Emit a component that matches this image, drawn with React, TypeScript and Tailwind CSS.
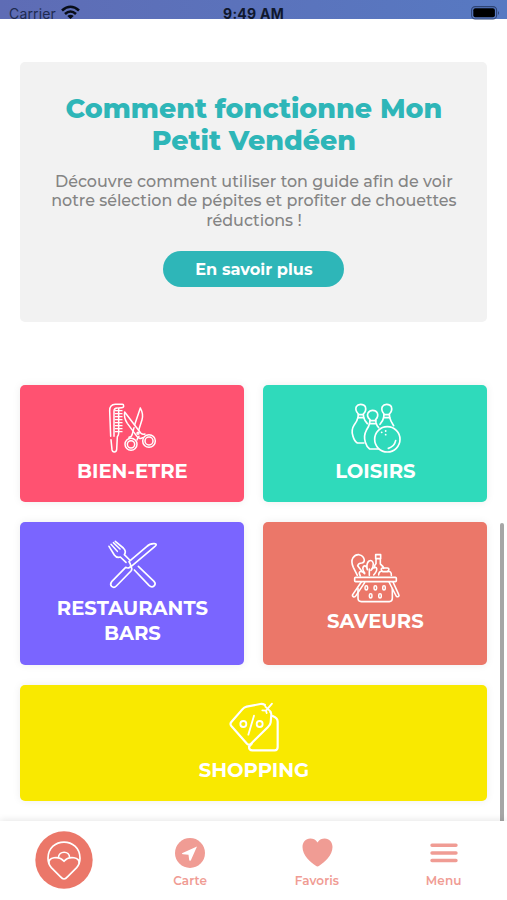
import { ReactNode } from "react";
import clsx from "clsx";

function CombIcon() {
    return (
        <svg className="w-[50px] h-[51px] overflow-visible" viewBox="51 37 150 153" fill="none" stroke="currentColor" strokeWidth="4.5" strokeLinecap="round" strokeLinejoin="round">
            <path d="M62 137 L59 60 Q59 42 76 41 L97 41 Q101 41 101 46 Q101 51 95 51 L86 52 V128 Q86 133 82 138 L80 177 Q79 184 73 184 Q67 184 66 177 L63 147" />
            <path d="M72 137 V62 Q72 52 82 52" />
            <path d="M76 60H96M76 69H96M76 78H96M76 87H96M76 96H96M76 105H96M76 114H96M76 123H96" strokeWidth="4" />
            <path d="M104 64 Q101 82 112 98 L139 135 Q148 148 158 141 M104 64 L152 127 Q158 133 165 130" />
            <path d="M151 52 Q161 70 156 87 L146 119 M151 52 L134 102 M132 111 L127 130 Q125 139 117 140 M147 137 Q142 142 141 148" />
            <circle cx="144" cy="128" r="3" />
            <circle cx="123" cy="161" r="18" />
            <circle cx="123" cy="161" r="11" />
            <circle cx="177" cy="151" r="19" />
            <circle cx="177" cy="151" r="12" />
        </svg>
    );
}

function BowlingIcon() {
    return (
        <svg className="w-[50px] h-[51px] overflow-visible" viewBox="59 37 150 153" fill="none" stroke="currentColor" strokeWidth="5" strokeLinecap="round" strokeLinejoin="round">
            <path d="M84 70 Q73 59 78 48 Q82 41 91 41 Q101 41 105 48 Q109 60 99 70 L100 80 Q102 89 111 99 M84 70 L83 80 Q81 90 72 102 Q61 119 68 137 Q72 152 81 157 H101" />
            <path d="M84 72H99M83 81H100" />
            <path d="M119 87 Q108 77 113 67 Q118 59 127 59 Q137 59 141 67 Q145 77 136 87 L137 96 Q139 105 145 111 M119 87 L118 97 Q116 107 108 119 Q99 135 105 155 Q109 169 118 175 H144" />
            <path d="M119 90H136M118 99H137" />
            <path d="M161 70 Q151 59 156 48 Q160 41 169 41 Q179 41 183 48 Q187 60 177 70 L178 80 Q180 90 190 105 M161 70 L160 80 Q159 89 149 101" />
            <path d="M161 72H177M160 81H178" />
            <circle cx="171" cy="146" r="38" />
            <path d="M196 150 Q192 168 174 173" />
            <path d="M154 125h.1M166 121h.1M166 132h.1" strokeWidth="5.5" />
        </svg>
    );
}

function CutleryIcon() {
    return (
        <svg className="w-[50px] h-[51px] overflow-visible" viewBox="51 31 150 153" fill="none" stroke="currentColor" strokeWidth="5" strokeLinecap="round" strokeLinejoin="round">
            <path d="M57 50 L73 76 Q80 86 91 82 L108 98 M76 35 L100 55 Q110 65 103 75 L119 91" />
            <path d="M63 44 L82 65 M70 39 L90 58" strokeWidth="4.5" />
            <path d="M123 111 L194 51 Q204 43 193 42 Q180 41 170 51 L117 96 Q126 108 119 113 Q114 117 107 113 L65 156 Q59 164 65 170 Q72 176 79 169 L123 124 Q128 118 123 111" />
            <path d="M133 121 L177 167 Q185 175 192 169 Q199 162 192 155 L145 110" />
        </svg>
    );
}

function BasketIcon() {
    return (
        <svg className="w-[50px] h-[51px] overflow-visible" viewBox="59 38 150 153" fill="none" stroke="currentColor" strokeWidth="4.8" strokeLinecap="round" strokeLinejoin="round">
            <rect x="73" y="111" width="125" height="13" rx="3" />
            <path d="M83 145 V174 Q83 184 93 184 H177 Q186 184 186 174 V145" />
            <path d="M93 125 L67 163 Q65 168 70 170 Q74 171 77 166 L103 127 M176 125 L196 164 Q199 171 203 169 Q208 167 205 162 L188 125" />
            <path d="M81 105 L69 81 Q61 64 68 52 Q75 42 86 43 Q100 46 102 59 Q102 67 94 68 Q85 68 82 76 L94 92" />
            <path d="M90 107 Q84 97 89 94 Q94 91 103 100 M103 98 Q93 83 101 77 Q108 74 111 88 Q107 69 116 62 Q126 57 129 70 Q130 79 122 90 Q131 77 138 82 Q143 89 130 104 M117 86V105" />
            <path d="M136 43 H151 V55 H136 Z M137 57 V70 Q131 75 133 82 M150 57 V71 Q158 77 160 84" />
            <path d="M145 104 Q145 92 156 93 Q149 84 157 83 H171 Q180 84 172 93 Q184 92 183 105 M157 94H173" />
            <path d="M108 140v5M135 140v5M161 140v5M121 164v5M149 164v5" strokeWidth="12" />
            <path d="M108 140v5M135 140v5M161 140v5M121 164v5M149 164v5" stroke="#eb7769" strokeWidth="3" />
        </svg>
    );
}

function TagIcon() {
    return (
        <svg className="w-[51px] h-[51px] overflow-visible" viewBox="112 37 153 153" fill="none" stroke="currentColor" strokeWidth="6.5" strokeLinecap="round" strokeLinejoin="round">
            <path d="M223 46 Q216 42 209 43 L168 51 Q160 53 155 59 L122 97 Q117 103 122 109 L169 162 Q175 168 181 162 L232 112 Q239 106 240 98 L242 75 Q242 70 239 67" />
            <path d="M246 79 Q261 85 261 96 V172 Q261 182 252 182 H185 Q175 182 175 171 M175 171 L183 162" />
            <path d="M215 62 L226 63 L228 70 M226 63 L244 42 M224 51 L240 66" strokeWidth="5.5" />
            <path d="M190 78 L173 135" strokeWidth="5.5" />
            <circle cx="158" cy="103" r="9" strokeWidth="5.5" />
            <circle cx="207" cy="103" r="9" strokeWidth="5.5" />
        </svg>
    );
}

interface CategoryProps {
    className: string;
    icon: ReactNode;
    children: ReactNode;
}
function Category({ className, icon, children }: CategoryProps) {
    return (
        <button className={clsx("flex flex-col items-center justify-center rounded-[5px] text-white shadow-[0_0_8px_rgba(0,0,0,0.07)]", className)}>
            {icon}
            <span className="mt-[4.8px] text-[19.6px] leading-[25.4px] font-bold">{children}</span>
        </button>
    );
}

interface TabProps {
    label: string;
    children: ReactNode;
}
function Tab({ label, children }: TabProps) {
    return (
        <div className="flex flex-col items-center pt-4">
            <div className="h-[31px] flex items-center">{children}</div>
            <span className="mt-1 text-[12px] leading-[18px] font-semibold tracking-[0.1px]">{label}</span>
        </div>
    );
}

export default function App() {
    return (
        <div className="w-full h-[900px] flex flex-col overflow-hidden bg-white font-['Montserrat','Inter',sans-serif]">
            <header className="h-[19px] shrink-0 grid grid-cols-3 items-start px-[9px] bg-linear-to-r from-[#5e6cb5] to-[#5779c2] font-['Inter',sans-serif] text-[#10182d]">
                <div className="flex items-start">
                    <span className="pt-[6px] text-[14px] leading-[15px] tracking-[0.15px] text-[#202b50]">Carrier</span>
                    <svg className="ml-[5px] mt-[5px] w-[19px] h-[14px]" viewBox="0 0 19 14" fill="none" stroke="#080d18" strokeWidth="2.6">
                        <path d="M1 5.5 Q9.5 -2 18 5.5 M4 9 Q9.5 4 15 9" />
                        <path d="M6.3 11 Q9.5 8.4 12.7 11 L9.5 14 Z" fill="#080d18" stroke="none" />
                    </svg>
                </div>
                <span className="pt-[6px] text-center text-[14px] leading-[15px] font-bold tracking-[0.25px] whitespace-nowrap">9:49 AM</span>
                <svg className="justify-self-end mt-[6px] -mr-[2px] w-[29px] h-[14px]" viewBox="0 0 29 14">
                    <rect x="0.6" y="0.6" width="25" height="12.4" rx="3.6" fill="none" stroke="#2e4474" strokeWidth="1.1" />
                    <rect x="2.3" y="2.3" width="21.6" height="9" rx="2" fill="#000" />
                    <path d="M27 5 Q29 7 27 9 Z" fill="#2e4474" />
                </svg>
            </header>

            <main className="relative h-[802px] shrink-0 flex flex-col pl-[20.4px] pt-[43px]">
                <section className="h-[260px] w-[467px] flex flex-col items-center rounded-[5px] bg-[#f2f2f2] pt-[31px] text-center">
                    <h1 className="text-[26.9px] leading-[31.5px] font-extrabold text-[#2eb6b8]">
                        Comment fonctionne Mon
                        <br />
                        Petit Vendéen
                    </h1>
                    <p className="mt-[15.5px] text-[15.95px] leading-[19.5px] font-medium text-[#848484]">
                        Découvre comment utiliser ton guide afin de voir
                        <br />
                        notre sélection de pépites et profiter de chouettes
                        <br />
                        réductions !
                    </p>
                    <button className="mt-[21px] w-[181px] h-9 rounded-full bg-[#2eb6b8] text-[16.2px] font-bold text-white">En savoir plus</button>
                </section>

                <section className="mt-[63px] w-[467px] grid grid-cols-2 grid-rows-[117px_143px_116px] gap-x-[19px] gap-y-5">
                    <Category className="bg-[#ff5271]" icon={<CombIcon />}>BIEN-ETRE</Category>
                    <Category className="bg-[#2fdabb]" icon={<BowlingIcon />}>LOISIRS</Category>
                    <Category className="bg-[#7a65ff]" icon={<CutleryIcon />}>RESTAURANTS<br />BARS</Category>
                    <Category className="bg-[#eb7769]" icon={<BasketIcon />}>SAVEURS</Category>
                    <Category className="col-span-2 bg-[#f9e900]" icon={<TagIcon />}>SHOPPING</Category>
                </section>

                <div className="absolute right-[3px] bottom-0 w-[4px] h-[298px] rounded-t-full bg-[#a6a6a6]" />
            </main>

            <nav className="relative h-[79px] shrink-0 grid grid-cols-4 bg-white shadow-[0_-1px_7px_rgba(0,0,0,0.1)] text-[#f09c94]">
                <div className="flex justify-center pt-[10px] pl-[2px]">
                    <svg className="w-[58px] h-[58px]" viewBox="106 93 174 174" fill="none" stroke="#fff" strokeWidth="5" strokeLinejoin="round">
                        <circle cx="193" cy="180" r="86" fill="#eb7769" stroke="none" />
                        <path d="M193 237 Q188 237 182 230 L155 203 Q145 192 145 175 C145 110 241 110 241 175 Q241 192 231 203 L204 230 Q198 237 193 237 Z" />
                        <path d="M148 191 C143 171 178 166 193 184 C208 166 243 171 238 191" />
                        <path d="M176 174 C177 151 210 151 210 174" />
                    </svg>
                </div>
                <Tab label="Carte">
                    <svg className="w-[30px] h-[30px]" viewBox="0 0 30 30">
                        <circle cx="15" cy="15" r="15" fill="currentColor" />
                        <path d="M22 8.5 L7 15.2 Q6.8 16.2 8 16.2 L13.5 16.8 L14.2 22 Q15 23.7 16 22 Z" fill="#fff" />
                    </svg>
                </Tab>
                <Tab label="Favoris">
                    <svg className="ml-px w-[31px] h-[29px]" viewBox="0 0 31 29" fill="currentColor">
                        <path d="M15.5 4.4 C17.5 1.5 20 .5 22.7 .5 C27.5 .5 30.5 4.3 30.5 9 C30.5 17.5 22.5 24 17.2 27.8 Q15.5 29 13.8 27.8 C8.5 24 .5 17.5 .5 9 C.5 4.3 3.5 .5 8.3 .5 C11 .5 13.5 1.5 15.5 4.4 Z" />
                    </svg>
                </Tab>
                <Tab label="Menu">
                    <svg className="w-[28px] h-[20px]" viewBox="0 0 28 20" fill="none" stroke="currentColor" strokeWidth="3.4" strokeLinecap="round">
                        <path d="M2 2.3H26M2 10H26M2 17.5H26" />
                    </svg>
                </Tab>
            </nav>
        </div>
    );
}
